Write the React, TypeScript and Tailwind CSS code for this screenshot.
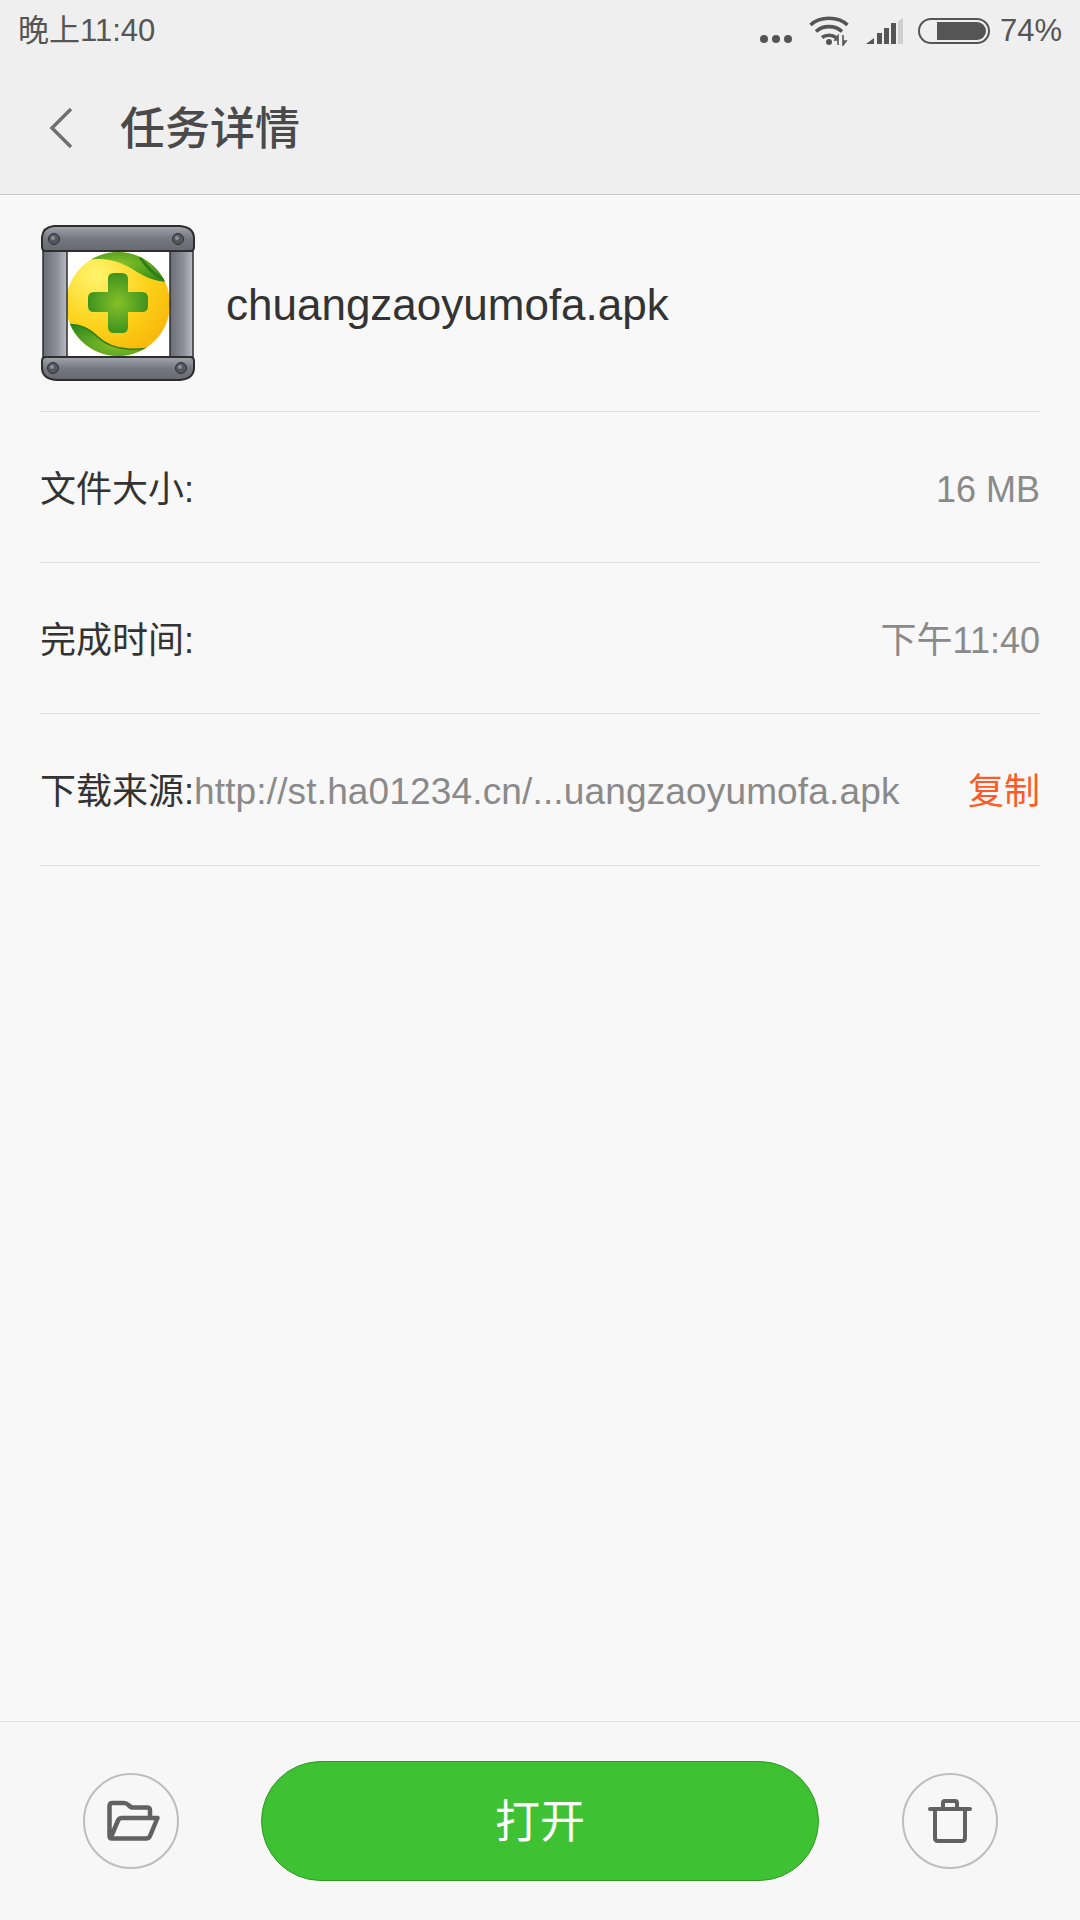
const sans = 'font-["Liberation_Sans","Noto_Sans_CJK_SC",sans-serif]';

function WifiIcon() {
  return (
    <svg className="mt-px" width="40" height="30" viewBox="0 0 40 30" fill="none" stroke="#555" strokeWidth="3.6">
      <path d="M1.5 9 C11 0 29 0 38.5 9" />
      <path d="M7 15.5 C14 9 26 9 33 15.5" />
      <path d="M13 21.5 C17 18.5 23 18.5 27 21.5" />
      <circle cx="20" cy="26" r="3" fill="#555" stroke="none" />
      <path d="M29 29 V20 L26 24 H29 M34 19 V29 L37 25 H34" strokeWidth="1.6" />
    </svg>
  );
}

function SignalIcon() {
  return (
    <svg width="37" height="26" viewBox="0 0 37 26">
      <path d="M0 26 L8 20 V26 Z" fill="#555" />
      <rect x="11" y="15" width="5" height="11" fill="#555" />
      <rect x="18" y="10" width="5" height="16" fill="#555" />
      <rect x="25" y="5" width="5" height="21" fill="#555" />
      <path d="M32 3 L37 0 V26 H32 Z" fill="#cfcfcf" />
    </svg>
  );
}

function AppIcon() {
  return (
    <svg width="156" height="156" viewBox="0 0 156 156">
      <defs>
        <radialGradient id="ball" cx="0.3" cy="0.25" r="0.95">
          <stop offset="0" stopColor="#fff46e" />
          <stop offset="0.45" stopColor="#fdd21a" />
          <stop offset="1" stopColor="#f4a600" />
        </radialGradient>
        <linearGradient id="metal" x1="0" y1="0" x2="0" y2="1">
          <stop offset="0" stopColor="#a3a6ae" />
          <stop offset="0.5" stopColor="#757880" />
          <stop offset="1" stopColor="#666971" />
        </linearGradient>
        <linearGradient id="metalSide" x1="0" y1="0" x2="1" y2="0">
          <stop offset="0" stopColor="#6a6d75" />
          <stop offset="0.6" stopColor="#8e919a" />
          <stop offset="1" stopColor="#b9bcc4" />
        </linearGradient>
        <radialGradient id="leaf" cx="0.5" cy="0.5" r="0.6">
          <stop offset="0" stopColor="#86c028" />
          <stop offset="1" stopColor="#2f8a1c" />
        </radialGradient>
        <clipPath id="disc">
          <circle cx="78" cy="79" r="52" />
        </clipPath>
      </defs>
      <rect x="20" y="24" width="116" height="110" fill="#fff" />
      <g clipPath="url(#disc)">
        <rect x="20" y="20" width="120" height="120" fill="url(#ball)" />
        <path d="M28 44 C40 32 68 30 89 42 C102 50 112 57 130 57 V20 H28 Z" fill="url(#leaf)" />
        <path d="M24 100 C36 98 48 102 58 112 C72 126 104 130 132 114 V140 H24 Z" fill="url(#leaf)" />
        <path d="M24 100 C36 98 48 102 58 112 C72 126 104 130 132 114" fill="none" stroke="#2f7d16" strokeWidth="1.5" />
        <path d="M100 32 C108 44 118 54 130 56" fill="none" stroke="#2f7d16" strokeWidth="3" />
      </g>
      <path
        d="M68 54 Q68 48 74 48 H82 Q88 48 88 54 V67 H102 Q108 67 108 73 V81 Q108 87 102 87 H88 V102 Q88 108 82 108 H74 Q68 108 68 102 V87 H54 Q48 87 48 81 V73 Q48 67 54 67 H68 Z"
        fill="url(#leaf)"
      />
      <rect x="3" y="26" width="24" height="106" fill="url(#metalSide)" stroke="#2e2e2e" strokeWidth="1.5" />
      <rect x="130" y="26" width="23" height="106" fill="url(#metalSide)" stroke="#2e2e2e" strokeWidth="1.5" />
      <path d="M2 12 Q3 2 14 1 H140 Q153 2 154 12 V22 Q154 26 150 26 H6 Q2 26 2 22 Z" fill="url(#metal)" stroke="#2e2e2e" strokeWidth="2" />
      <path d="M2 136 Q2 132 6 132 H150 Q154 132 154 136 V144 Q153 154 140 155 H16 Q3 154 2 144 Z" fill="url(#metal)" stroke="#2e2e2e" strokeWidth="2" />
      {[
        [14, 14],
        [138, 14],
        [13, 143],
        [141, 143],
      ].map(([cx, cy]) => (
        <g key={`${cx}-${cy}`}>
          <circle cx={cx} cy={cy} r="5.5" fill="#54575c" stroke="#2f3033" strokeWidth="1" />
          <circle cx={cx - 1} cy={cy - 1} r="2" fill="#8d9096" />
        </g>
      ))}
    </svg>
  );
}

function FolderIcon() {
  return (
    <svg className="ml-[4px]" width="54" height="42" viewBox="0 0 54 42" fill="none" stroke="#626262" strokeWidth="4.5" strokeLinejoin="round" strokeLinecap="round">
      <path d="M5 37 L12 20.5 Q13 18 16 18 H51.5 L44 36 Q43 38.5 40 38.5 H6 Q3.5 38.5 3.5 36 V6 Q3.5 3 6.5 3 H18 Q20.5 3 22.5 5 Q24.5 7.5 27 7.5 H41 Q44 7.5 44 10.5 V16" />
    </svg>
  );
}

function TrashIcon() {
  return (
    <svg width="44" height="44" viewBox="0 0 44 44" fill="none" stroke="#626262" strokeWidth="4" strokeLinejoin="round" strokeLinecap="round">
      <path d="M2 10 H42" />
      <path d="M7 10 V39 Q7 42 10 42 H34 Q37 42 37 39 V10" />
      <path d="M15 10 V4 Q15 2 17 2 H27 Q29 2 29 4 V10" />
    </svg>
  );
}

function InfoRow({ label, value }: { label: string; value: string }) {
  return (
    <div className="flex h-[151px] items-center justify-between border-b border-[#e0e0e0] pt-[5px]">
      <span className="text-[36px] text-[#333]">{label}</span>
      <span className="text-[36px] text-[#8a8a8a]">{value}</span>
    </div>
  );
}

export default function App() {
  return (
    <div className={`flex h-[1920px] w-[1080px] flex-col bg-[#f8f8f8] ${sans}`}>
      <div className="h-[195px] shrink-0 border-b border-[#c8c8c8] bg-[#efefef]">
        <div className="flex h-[60px] items-center justify-between pl-[18px] pr-[18px] text-[#555]">
          <span className="mt-[3px] text-[31px]">晚上11:40</span>
          <div className="flex items-center">
            <div className="mt-[18px] mr-[17px] flex gap-[4px]">
              <span className="h-2 w-2 rounded-full bg-[#555]" />
              <span className="h-2 w-2 rounded-full bg-[#555]" />
              <span className="h-2 w-2 rounded-full bg-[#555]" />
            </div>
            <WifiIcon />
            <div className="ml-[17px] mr-[15px] mt-px">
              <SignalIcon />
            </div>
            <div className="mt-[2px] flex h-[26px] w-[72px] items-center justify-end rounded-full border-2 border-[#555] p-[2px]">
              <div className="h-[18px] w-[49px] rounded-r-full bg-[#555]" />
            </div>
            <span className="ml-[10px] mt-[2px] text-[31px]">74%</span>
          </div>
        </div>
        <div className="flex h-[135px] items-center">
          <svg className="ml-[49px]" width="24" height="42" viewBox="0 0 24 42" fill="none" stroke="#707070" strokeWidth="3.5">
            <path d="M22 2 L3 21 L22 40" />
          </svg>
          <span className="ml-[47px] mt-[4px] text-[45px] font-medium text-[#4a4a4a]">任务详情</span>
        </div>
      </div>

      <div className="flex-1 px-[40px]">
        <div className="flex h-[217px] items-center border-b border-[#e0e0e0]">
          <AppIcon />
          <span className="ml-[30px] mt-[4px] text-[44px] text-[#333]">chuangzaoyumofa.apk</span>
        </div>
        <InfoRow label="文件大小:" value="16 MB" />
        <InfoRow label="完成时间:" value="下午11:40" />
        <div className="flex h-[152px] items-center justify-between border-b border-[#e0e0e0] pt-[5px] text-[36px]">
          <div className="flex items-center">
            <span className="text-[#333]">下载来源:</span>
            <span className="text-[37px] tracking-[0.15px] text-[#8a8a8a]">http://st.ha01234.cn/...uangzaoyumofa.apk</span>
          </div>
          <span className="text-[#ff5a23]">复制</span>
        </div>
      </div>

      <div className="flex h-[199px] shrink-0 items-center border-t border-[#e0e0e0] bg-[#f7f7f7] pl-[83px]">
        <button className="flex h-[96px] w-[96px] items-center justify-center rounded-full border-2 border-[#bdbdbd]">
          <FolderIcon />
        </button>
        <button className="ml-[82px] flex h-[120px] w-[558px] items-center justify-center rounded-full border border-[#2e9a22] bg-[#3ec133] pt-1 text-[45px] text-white">
          打开
        </button>
        <button className="ml-[83px] flex h-[96px] w-[96px] items-center justify-center rounded-full border-2 border-[#bdbdbd]">
          <TrashIcon />
        </button>
      </div>
    </div>
  );
}
